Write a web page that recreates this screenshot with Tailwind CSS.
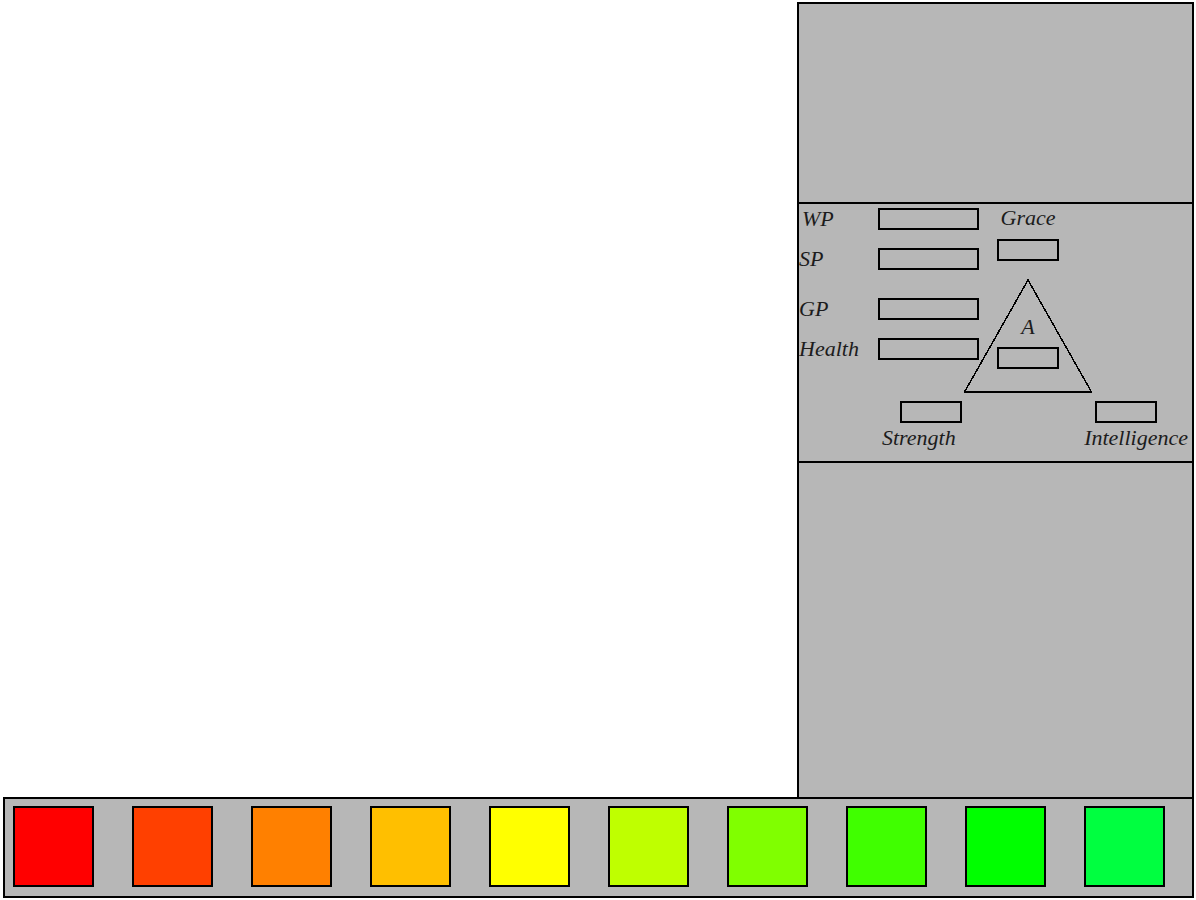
<!DOCTYPE html>
<html lang="en">
<head>
<meta charset="utf-8">
<meta name="viewport" content="width=device-width, initial-scale=1">
<title>Character panel</title>
<script src="https://cdn.jsdelivr.net/npm/@tailwindcss/browser@4"></script>
</head>
<body class="bg-white">
<div class="flex min-h-screen flex-col pt-[2px] pr-[2px] pb-[2px] pl-[3px]">
  <main class="flex flex-1">
    <section class="flex-1" aria-label="Game view"></section>
    <aside class="flex w-1/3 min-w-[397px] flex-col border-2 border-b-0 border-black bg-[#b7b7b7]">
      <section class="flex-[198]" aria-label="Map"></section>

      <form class="border-y-2 border-black pb-[11px] font-['Liberation_Serif',serif] text-[22px] leading-6 text-[#1c1c1c] italic">
        <div class="flex">
          <!-- Point pools -->
          <div class="z-10 flex w-[180px] flex-col gap-[18px] pt-1">
            <div class="flex h-[22px] items-center justify-between">
              <label for="wp" class="pl-[3px]">WP</label>
              <input id="wp" class="h-[22px] w-[101px] border-2 border-black px-1 text-sm">
            </div>
            <div class="flex h-[22px] items-center justify-between">
              <label for="sp">SP</label>
              <input id="sp" class="h-[22px] w-[101px] border-2 border-black px-1 text-sm">
            </div>
            <div class="mt-[10px] flex h-[22px] items-center justify-between">
              <label for="gp">GP</label>
              <input id="gp" class="h-[22px] w-[101px] border-2 border-black px-1 text-sm">
            </div>
            <div class="flex h-[22px] items-center justify-between">
              <label for="health">Health</label>
              <input id="health" class="h-[22px] w-[101px] border-2 border-black px-1 text-sm">
            </div>
          </div>

          <!-- Attribute triangle -->
          <div class="-ml-4 flex w-[130px] flex-col items-center pt-[2px]">
            <label for="grace">Grace</label>
            <input id="grace" class="mt-[9px] h-[22px] w-[62px] border-2 border-black px-1 text-sm">
            <div class="relative mt-[18px] h-[114px] w-[130px]">
              <svg class="absolute inset-0" width="130" height="114" viewBox="0 0 130 114" fill="none" stroke="#000" aria-hidden="true">
                <path d="M1.5 113 65 1 128.5 113" stroke-width="1.5" shape-rendering="crispEdges"/>
                <path d="M1 113H129" stroke-width="2"/>
              </svg>
              <div class="relative flex flex-col items-center gap-2 pt-9">
                <label for="armor">A</label>
                <input id="armor" class="h-[22px] w-[62px] border-2 border-black px-1 text-sm">
              </div>
            </div>
          </div>
        </div>

        <div class="flex justify-between pt-2 pr-1 pl-[79px]">
          <div class="flex w-[106px] flex-col gap-[3px]">
            <input id="strength" class="ml-[22px] h-[22px] w-[62px] border-2 border-black px-1 text-sm">
            <label for="strength" class="pl-1">Strength</label>
          </div>
          <div class="flex flex-col gap-[3px]">
            <input id="intelligence" class="ml-[11px] h-[22px] w-[62px] border-2 border-black px-1 text-sm">
            <label for="intelligence">Intelligence</label>
          </div>
        </div>
      </form>

      <section class="flex-[334]" aria-label="Inventory"></section>
    </aside>
  </main>

  <footer class="flex justify-between border-2 border-black bg-[#b7b7b7] pt-[7px] pr-[27px] pb-[9px] pl-2">
    <button type="button" aria-label="Slot 1" class="size-[81px] border-2 border-black bg-[#ff0000]"></button>
    <button type="button" aria-label="Slot 2" class="size-[81px] border-2 border-black bg-[#ff4000]"></button>
    <button type="button" aria-label="Slot 3" class="size-[81px] border-2 border-black bg-[#ff8000]"></button>
    <button type="button" aria-label="Slot 4" class="size-[81px] border-2 border-black bg-[#ffbf00]"></button>
    <button type="button" aria-label="Slot 5" class="size-[81px] border-2 border-black bg-[#ffff00]"></button>
    <button type="button" aria-label="Slot 6" class="size-[81px] border-2 border-black bg-[#bfff00]"></button>
    <button type="button" aria-label="Slot 7" class="size-[81px] border-2 border-black bg-[#80ff00]"></button>
    <button type="button" aria-label="Slot 8" class="size-[81px] border-2 border-black bg-[#40ff00]"></button>
    <button type="button" aria-label="Slot 9" class="size-[81px] border-2 border-black bg-[#00ff00]"></button>
    <button type="button" aria-label="Slot 10" class="size-[81px] border-2 border-black bg-[#00ff40]"></button>
  </footer>
</div>
</body>
</html>
